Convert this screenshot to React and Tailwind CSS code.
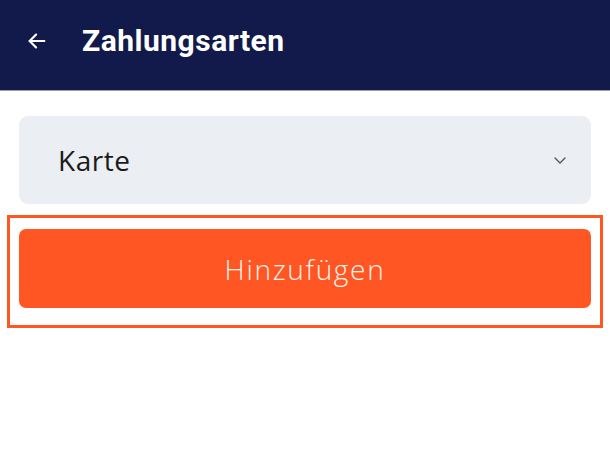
import React from "react";

export default function App() {
  return (
    <div className="w-[610px] h-[474px] bg-white" style={{ fontFamily: "Roboto, 'Noto Sans', sans-serif" }}>
      <div className="h-[91px] bg-[#111a4b] flex items-center pb-[9px] border-b border-[#9aa0b4]">
        <svg className="ml-[26px]" width="22" height="22" viewBox="0 0 24 24" fill="none" stroke="white" strokeWidth="2.4" strokeLinecap="round" strokeLinejoin="round">
          <path d="M20 12H4" />
          <path d="M11 5l-7 7 7 7" />
        </svg>
        <div className="ml-[34px] text-white text-[30px] font-bold tracking-[0.5px]">Zahlungsarten</div>
      </div>
      <div className="px-[19px] pt-[25px]">
        <div className="h-[88px] rounded-[9px] bg-[#ebeef2] flex items-center justify-between pl-[39px] pr-[24px]">
          <span className="text-[28px] text-[#1a1a1a] tracking-[0.5px]" style={{ fontFamily: "'Open Sans', sans-serif" }}>Karte</span>
          <svg width="14" height="10" viewBox="0 0 14 10" fill="none" stroke="#555" strokeWidth="1.4" strokeLinecap="round" strokeLinejoin="round">
            <path d="M2 3l5 5 5-5" />
          </svg>
        </div>
      </div>
      <div className="mx-[7px] mt-[11px] border-[3px] border-[#ff5722] px-[9px] pt-[11px] pb-[17px]">
        <div className="h-[79px] rounded-[7px] bg-[#ff5623] flex items-center justify-center">
          <span className="text-[28px] text-[#fff3ee] font-light tracking-[1.7px]" style={{ fontFamily: "'Open Sans', sans-serif" }}>Hinzufügen</span>
        </div>
      </div>
    </div>
  );
}
